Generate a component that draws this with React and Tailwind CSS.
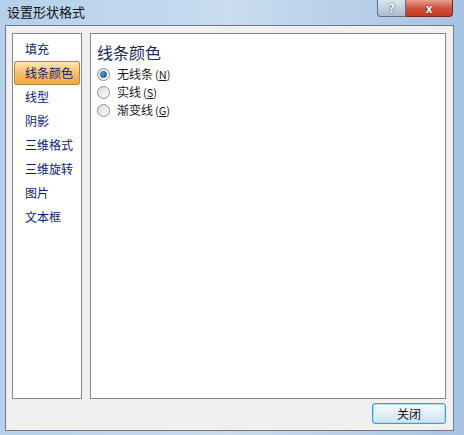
import React, { useState } from 'react'

const ITEMS = ['填充', '线条颜色', '线型', '阴影', '三维格式', '三维旋转', '图片', '文本框']
const OPTS = [['无线条', 'N'], ['实线', 'S'], ['渐变线', 'G']]

function Radio({ checked }) {
  return (
    <div className="w-[13px] h-[13px] rounded-full border border-[#8e8f8f] bg-gradient-to-br from-[#dcdcdc] to-[#fbfbfb] flex items-center justify-center">
      {checked && <div className="w-[7px] h-[7px] rounded-full bg-gradient-to-br from-[#6fb6e8] to-[#0f5a99] border border-[#1c5180]" />}
    </div>
  )
}

export default function App() {
  const [active, setActive] = useState(1)
  const [line, setLine] = useState(0)

  return (
    <div className="w-[464px] h-[435px] bg-gradient-to-r from-[#b5d0ec] via-[#c9dcf0] to-[#a7c3e2] font-['Noto_Sans_CJK_SC',sans-serif] overflow-hidden">
      {/* title bar */}
      <div className="h-[25px] flex items-start justify-between">
        <div className="pl-[7px] pt-[4px] text-[13px] leading-[16px] text-[#111]">设置形状格式</div>
        <div className="flex mr-[11px]">
          <div className="w-[29px] h-[17px] rounded-bl-[4px] border border-[#5d6f84] border-t-0 bg-gradient-to-b from-[#dce6f0] to-[#a9bccf] text-white text-[12px] font-bold leading-[15px] text-center [text-shadow:0_0_2px_#234]">?</div>
          <div className="w-[47px] h-[17px] rounded-br-[4px] border border-[#6e2a22] border-t-0 border-l-0 bg-gradient-to-b from-[#e8a08f] via-[#d0523b] to-[#c63a22] text-white text-[12px] font-bold leading-[15px] text-center [text-shadow:0_0_2px_#400]">x</div>
        </div>
      </div>

      {/* dialog body */}
      <div className="ml-[5px] w-[449px] h-[406px] border border-[#737b87] bg-[#f0f0f0] pl-[6px] pr-[7px] pt-[7px]">
        <div className="flex gap-[8px] h-[366px]">
          <div className="w-[70px] border border-[#828790] bg-white py-[3px] px-[1px]">
            {ITEMS.map((t, i) => (
              <div
                key={t}
                onClick={() => setActive(i)}
                className={`h-[24px] pl-[10px] text-[12px] leading-[22px] text-[#0c1d70] border ${
                  i === active
                    ? 'border-[#b08a4c] bg-gradient-to-b from-[#fde8b0] via-[#fbbf6a] to-[#f7a43e] rounded-[2px]'
                    : 'border-transparent'
                }`}
              >
                {t}
              </div>
            ))}
          </div>
          <div className="w-[356px] border border-[#828790] bg-white pl-[6px] pt-[7px]">
            <div className="text-[16px] leading-[22px] text-[#1d2a5c]">线条颜色</div>
            <div className="mt-[2px] flex flex-col">
              {OPTS.map(([t, k], i) => (
                <div key={t} onClick={() => setLine(i)} className="h-[18px] flex items-center gap-[7px]">
                  <Radio checked={line === i} />
                  <span className="text-[12px] leading-[18px] text-[#1a1a1a]">
                    {t}
                    <span className="ml-[2px] text-[11px]">(<span className="underline">{k}</span>)</span>
                  </span>
                </div>
              ))}
            </div>
          </div>
        </div>
        <div className="flex justify-end mt-[4px]">
          <button className="w-[74px] h-[21px] rounded-[3px] border border-[#3c9fd9] bg-gradient-to-b from-[#f4f9fc] via-[#e3eef6] to-[#cfe3f0] shadow-[inset_0_0_0_1px_#a9dcf6] text-[12px] leading-[18px] text-[#111]">
            关闭
          </button>
        </div>
      </div>
    </div>
  )
}
